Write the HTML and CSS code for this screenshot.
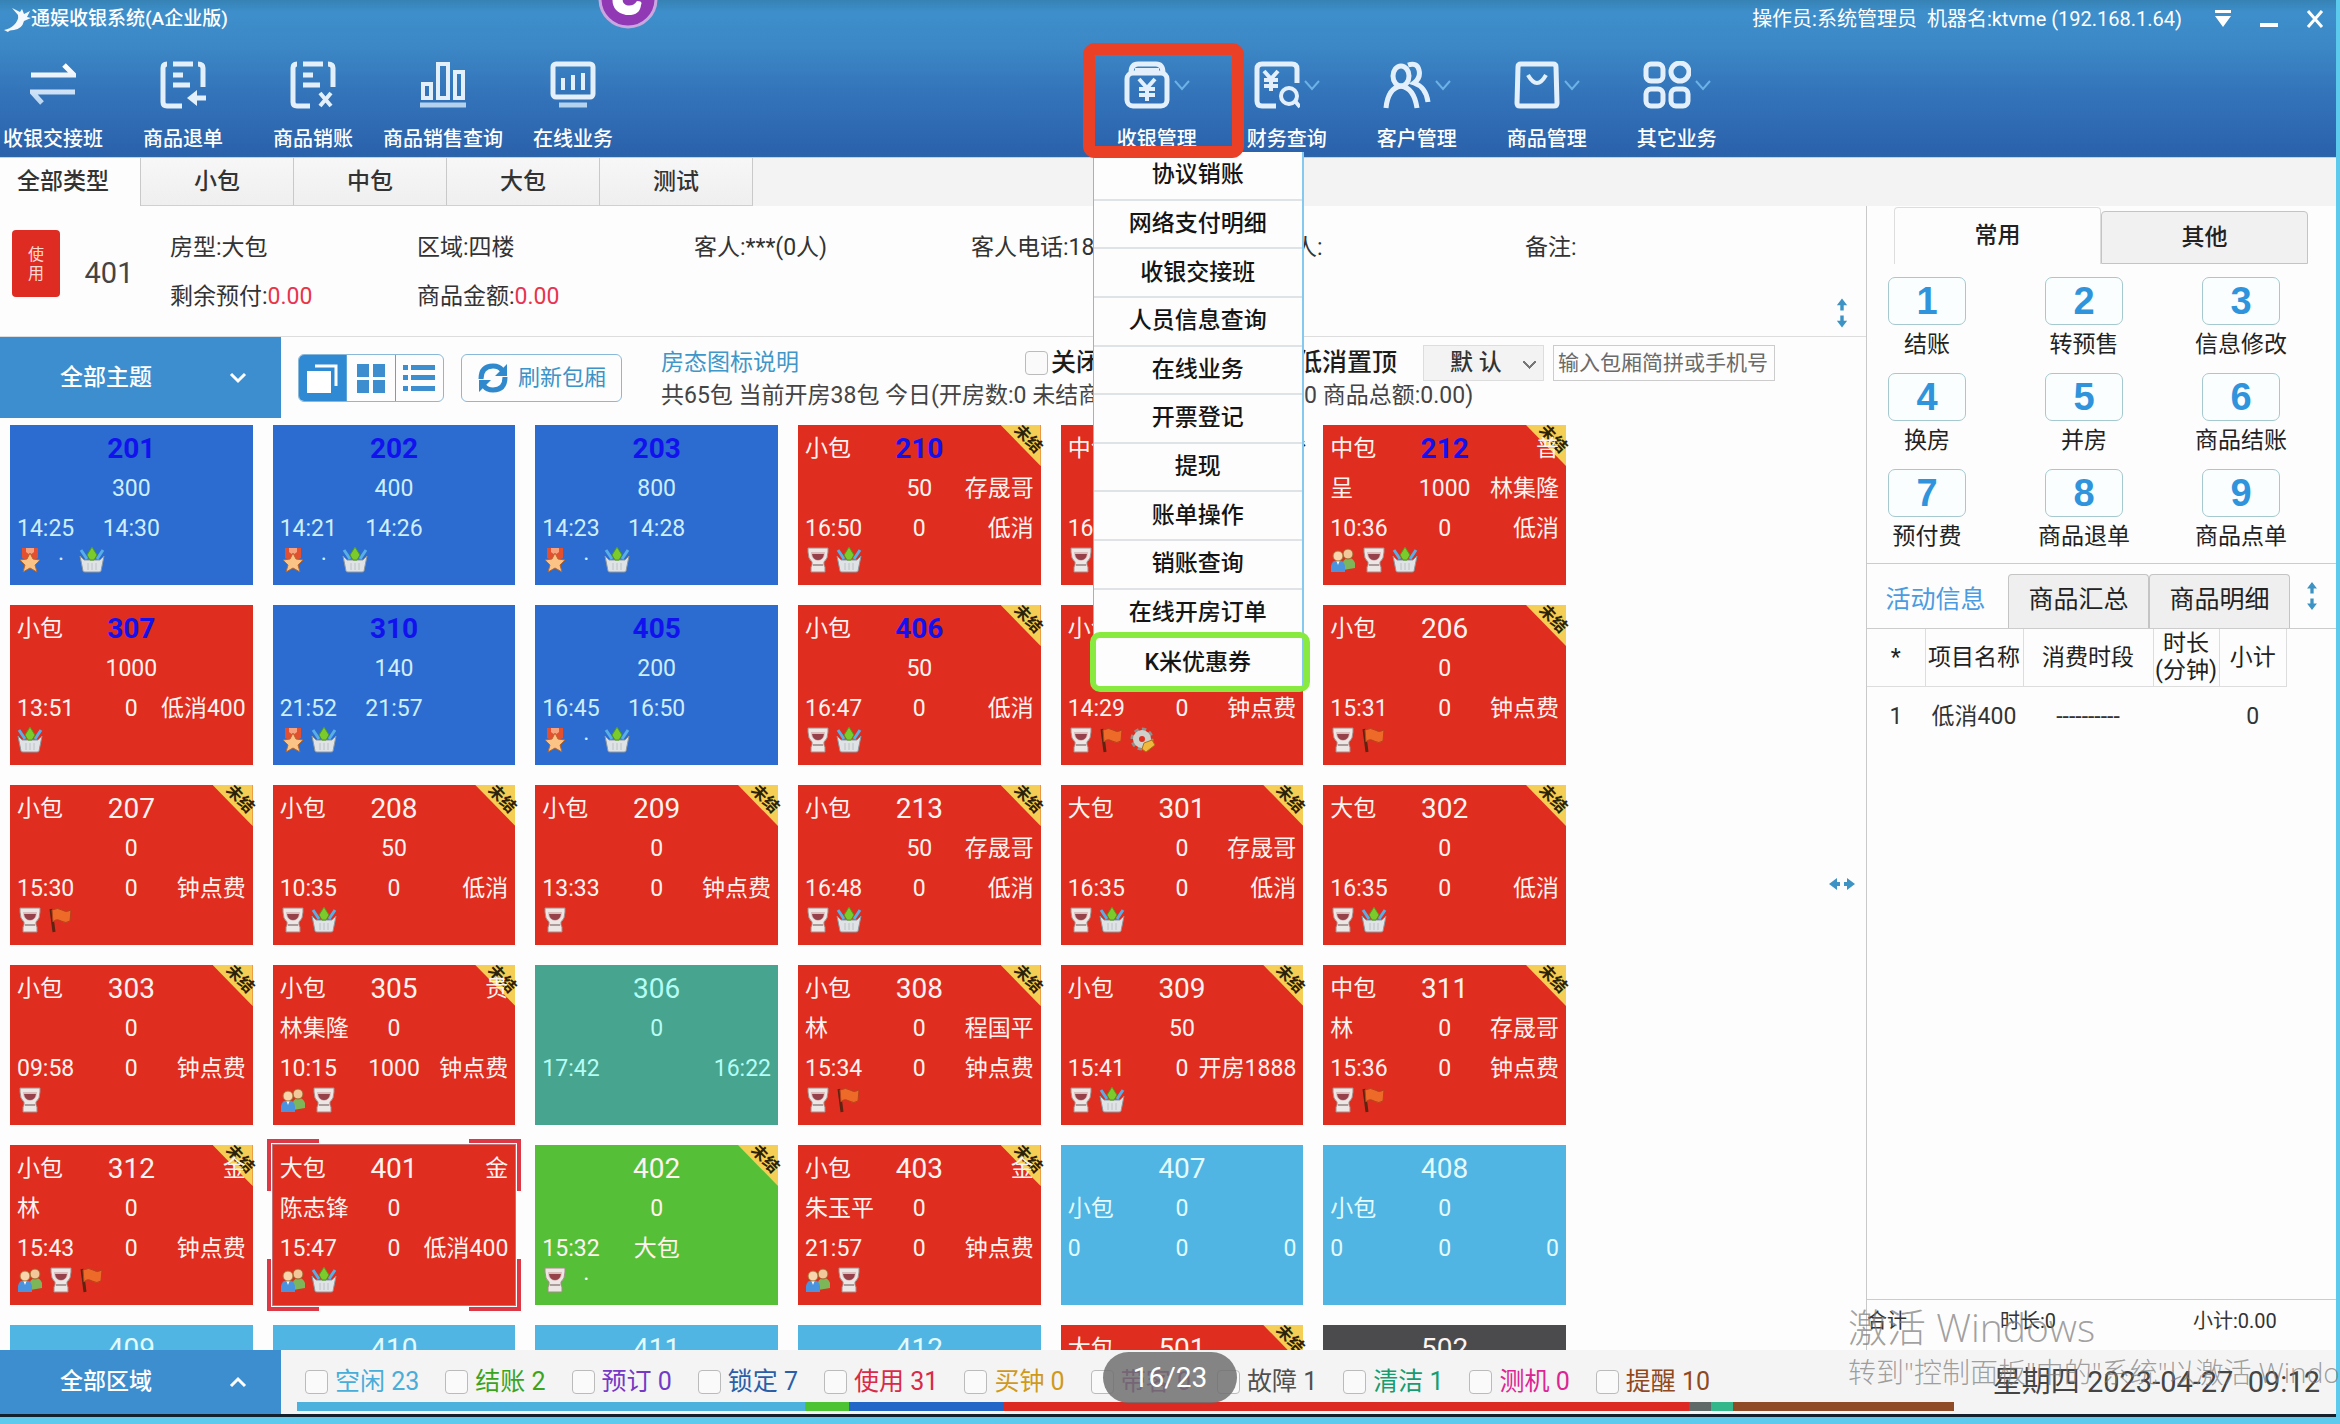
FILE: index.html
```html
<!DOCTYPE html>
<html lang="zh-CN">
<head>
<meta charset="utf-8">
<title>通娱收银系统(A企业版)</title>
<link rel="stylesheet" href="styles.css">
</head>
<body>
<svg class="defs" width="0" height="0" aria-hidden="true">
  <linearGradient id="metal" x1="0" y1="0" x2="0" y2="1"><stop offset="0" stop-color="#fff"/><stop offset="1" stop-color="#b9d6f2"/></linearGradient>
  <symbol id="chev" viewBox="0 0 16 12"><path d="M1 2l7 8 7-8" fill="none" stroke="#6db2e6" stroke-width="2"/></symbol>
  <symbol id="medal" viewBox="0 0 26 26"><path d="M5 1h16v10l-8 4-8-4z" fill="#e2502f"/><path d="M9 1h8v4l-4 3-4-3z" fill="#f7a27f"/><path d="M13 6l3 6 7 1-5 5 2 7-7-4-7 4 2-7-5-5 7-1z" fill="#fbc486" stroke="#b5672e"/></symbol>
  <symbol id="basket" viewBox="0 0 26 26"><path d="M1 9l3 15q0 1 2 1h14q2 0 2-1l3-15-4 4H5z" fill="#dfe3e6" stroke="#8d979c"/><path d="M2 3l6 9M24 3l-6 9" stroke="#58aee6" stroke-width="3"/><path d="M13 0l5 8-3 5h-4L8 8z" fill="#7bcb2c" stroke="#4f9a1c"/><path d="M9 16v7M13 16v7M17 16v7" stroke="#bcc2c6"/></symbol>
  <symbol id="cup" viewBox="0 0 26 26"><path d="M3 1h20v4q0 7-4 10v3l1 2v5H6v-5l1-2v-3Q3 12 3 5z" fill="#ece6e4" stroke="#a58c88"/><path d="M6 5h14q0 8-7 9-7-1-7-9z" fill="#d9bdbd"/><path d="M7 7h12q-1 6-6 6T7 7z" fill="#96404a"/><path d="M8 18h10" stroke="#a99c9a" stroke-width="2"/></symbol>
  <symbol id="flag" viewBox="0 0 26 26"><path d="M3 2l3 23" stroke="#5e2410" stroke-width="3"/><path d="M4 3q6-3 10 0t9 0l-1 11q-4 3-9 0t-8 1z" fill="#ee6a28" stroke="#b8431a"/></symbol>
  <symbol id="users" viewBox="0 0 26 26"><path d="M13 23V15q2-4 6-4t6 5v5z" fill="#7db659"/><circle cx="18" cy="7" r="5" fill="#f2c79a" stroke="#9a6528"/><path d="M1 25v-6q1-6 7-6t7 6v6z" fill="#4c93de"/><path d="M6 13l2 5 2-5z" fill="#fff"/><circle cx="8" cy="9" r="5" fill="#f8d5ac" stroke="#a8702e"/></symbol>
  <symbol id="gear" viewBox="0 0 26 26"><circle cx="12" cy="12" r="9" fill="none" stroke="#8f8f8c" stroke-width="5" stroke-dasharray="4 3"/><circle cx="12" cy="12" r="6" fill="none" stroke="#cfcfcc" stroke-width="6"/><path d="M14 16l8-3 3 5-9 7-4-3z" fill="#f0b83c" stroke="#a87612"/></symbol>
  <symbol id="updown" viewBox="0 0 14 34"><path d="M7 0l6 8H9v6H5V8H1zM7 34l6-8H9v-6H5v6H1z" fill="#3d93c4"/></symbol>
</svg>

<div class="window">
<header class="header">
  <div class="titlebar">
    <h1 class="title"><svg class="logo" width="28" height="26" viewBox="0 0 28 26"><path d="M1 24q6-1 10-5 5-5 4-10l-6-7 8 4 2-3 2 5 6-3-3 6 4 1-7 3q-2 8-10 9-5 0-6 2z" fill="#f3f9fd"/></svg>通娱收银系统(A企业版)</h1>
    <svg class="bubble" width="60" height="60" viewBox="0 0 60 60"><circle cx="30" cy="30" r="28" fill="#9138b4" stroke="#c9a6e0" stroke-width="3"/><path d="M16 22q-6 20 12 24 14 1 15-10 2-4-4-4-4 6-11 4-6-3-1-10z" fill="#fff"/></svg>
    <span class="operator">操作员:系统管理员&nbsp; 机器名:ktvme (192.168.1.64)</span>
    <div class="winbtns">
      <button aria-label="菜单"><svg width="18" height="18" viewBox="0 0 18 18"><path d="M1 0h16v3H1zM1 6h16l-8 11z" fill="#fff"/></svg></button>
      <button aria-label="最小化"><svg width="18" height="18" viewBox="0 0 18 18"><path d="M0 13h18v4H0z" fill="#fff"/></svg></button>
      <button aria-label="关闭"><svg width="18" height="18" viewBox="0 0 18 18"><path d="M2 1l14 16M16 1L2 17" stroke="#fff" stroke-width="3"/></svg></button>
    </div>
  </div>
  <nav class="toolbar">
    <div class="tools">
      <button class="tool"><span class="ico"><svg width="46" height="48" viewBox="0 0 46 48"><path d="M1 14h43L34 4M45 31H2l10 11" fill="none" stroke="url(#metal)" stroke-width="5"/></svg></span>收银交接班</button>
      <button class="tool"><span class="ico"><svg width="46" height="48" viewBox="0 0 46 48" fill="none" stroke="#e3f0fb" stroke-width="5"><path d="M7 3Q3 3 3 7v34q0 4 4 4h15M13 3h20M13 14h10M13 24h17M38 3q5 0 5 4v19M46 37H32"/><path d="M37 29l-10 8 10 8z" fill="#e3f0fb" stroke="none"/></svg></span>商品退单</button>
      <button class="tool"><span class="ico"><svg width="46" height="48" viewBox="0 0 46 48" fill="none" stroke="#e3f0fb" stroke-width="5"><path d="M7 3Q3 3 3 7v34q0 4 4 4h13M13 3h20M13 14h10M13 24h17M38 3q5 0 5 4v19" /><path d="M30 32l11 13M41 32L30 45" stroke-width="4"/></svg></span>商品销账</button>
      <button class="tool"><span class="ico"><svg width="48" height="48" viewBox="0 0 48 48" fill="none" stroke="#e3f0fb" stroke-width="4"><path d="M4 23h8v14H4zM19 3h10v34H19zM36 11h8v26h-8z"/><path d="M1 44h46" stroke="#b4d2ee" stroke-width="5"/></svg></span>商品销售查询</button>
      <button class="tool"><span class="ico"><svg width="46" height="48" viewBox="0 0 46 48" fill="none" stroke="#e3f0fb" stroke-width="5"><rect x="3" y="3" width="40" height="33" rx="3"/><path d="M13 17v12M23 14v15M33 12v17" stroke-width="4"/><path d="M9 44h28" stroke="#b4d2ee"/></svg></span>在线业务</button>
    </div>
    <div class="tools">
      <div class="tool-menu">
        <button class="tool"><span class="ico"><svg width="46" height="48" viewBox="0 0 46 48" fill="none" stroke="#e3f0fb" stroke-width="5"><rect x="3" y="12" width="40" height="33" rx="6"/><path d="M7 12q0-9 7-9h18q7 0 7 9"/><path d="M11 9h24M15 18l8 9 8-9M23 27v13M15 28h16M15 34h16" stroke-width="4"/></svg><svg width="16" height="12"><use href="#chev"/></svg></span>收银管理</button>
        <ul class="menu">
          <li><button>协议销账</button></li>
          <li><button>网络支付明细</button></li>
          <li><button>收银交接班</button></li>
          <li><button>人员信息查询</button></li>
          <li><button>在线业务</button></li>
          <li><button>开票登记</button></li>
          <li><button>提现</button></li>
          <li><button>账单操作</button></li>
          <li><button>销账查询</button></li>
          <li><button>在线开房订单</button></li>
          <li class="marked"><button>K米优惠券</button></li>
        </ul>
        <span class="highlight"></span>
      </div>
      <button class="tool"><span class="ico"><svg width="46" height="48" viewBox="0 0 46 48" fill="none" stroke="#e3f0fb" stroke-width="4"><path d="M43 22V8q0-5-5-5H8Q3 3 3 8v32q0 5 5 5h14" stroke-width="5"/><path d="M10 10l7 8 7-8M17 18v12M10 19h14M10 25h14M41 40l5 6"/><circle cx="35" cy="35" r="8"/></svg><svg width="16" height="12"><use href="#chev"/></svg></span>财务查询</button>
      <button class="tool"><span class="ico"><svg width="48" height="48" viewBox="0 0 48 48" fill="none" stroke="#e3f0fb" stroke-width="5"><ellipse cx="18" cy="15" rx="8" ry="10"/><path d="M3 47q2-20 15-22 13 2 16 22M25 4q9-3 11 5t-5 13q12 4 14 19"/></svg><svg width="16" height="12"><use href="#chev"/></svg></span>客户管理</button>
      <button class="tool"><span class="ico"><svg width="46" height="48" viewBox="0 0 46 48" fill="none" stroke="#e3f0fb" stroke-width="5"><path d="M7 3h32q3 0 3 3l1 36q0 3-3 3H6q-3 0-3-3L4 6q0-3 3-3z"/><path d="M14 14q9 16 18 0" stroke-width="4"/></svg><svg width="16" height="12"><use href="#chev"/></svg></span>商品管理</button>
      <button class="tool"><span class="ico"><svg width="48" height="48" viewBox="0 0 48 48" fill="none" stroke="#e3f0fb" stroke-width="5"><rect x="3" y="3" width="17" height="17" rx="5"/><circle cx="37" cy="11" r="9"/><rect x="3" y="28" width="17" height="17" rx="5"/><rect x="28" y="28" width="17" height="17" rx="5"/></svg><svg width="16" height="12"><use href="#chev"/></svg></span>其它业务</button>
    </div>
  </nav>
</header>

<nav class="types">
  <button class="type on">全部类型</button><button class="type">小包</button><button class="type">中包</button><button class="type">大包</button><button class="type">测试</button>
</nav>

<main class="main">
  <section class="left">
    <div class="info">
      <span class="badge">使<br>用</span>
      <strong class="roomno">401</strong>
      <div class="fields">
        <span>房型:大包</span><span>区域:四楼</span><span>客人:***(0人)</span><span>客人电话:18650000000</span><span>订房人:</span><span>备注:</span>
        <span>剩余预付:<em>0.00</em></span><span>商品金额:<em>0.00</em></span>
      </div>
      <svg class="split-v" width="12" height="32"><use href="#updown"/></svg>
    </div>

    <div class="filters">
      <button class="bluebox"><span>全部主题</span><svg width="18" height="12" viewBox="0 0 18 12"><path d="M2 2l7 7 7-7" fill="none" stroke="#fff" stroke-width="3"/></svg></button>
      <div class="views">
        <button class="on" aria-label="卡片"><svg width="34" height="32" viewBox="0 0 34 32"><path d="M1 9h24v22H1z" fill="#fff"/><path d="M9 4h21v20" fill="none" stroke="#fff" stroke-width="3"/></svg></button>
        <button aria-label="网格"><svg width="28" height="30" viewBox="0 0 28 30"><path d="M0 1h12v13H0zM16 1h12v13H16zM0 17h12v13H0zM16 17h12v13H16z" fill="#3d8ecf"/></svg></button>
        <button aria-label="列表"><svg width="32" height="28" viewBox="0 0 32 28"><path d="M0 1h5v5H0zM8 1h24v5H8zM0 11h5v5H0zM8 11h24v5H8zM0 22h5v5H0zM8 22h24v5H8z" fill="#3d8ecf"/></svg></button>
      </div>
      <button class="refresh"><svg width="32" height="32" viewBox="0 0 32 32"><path d="M4 17Q4 4 16 4q6 0 9 4M28 15q0 13-12 13-6 0-9-4" fill="none" stroke="#3089cc" stroke-width="5"/><path d="M30 2v12H18zM2 30V18h12z" fill="#3089cc"/></svg>刷新包厢</button>
      <div class="summary">
        <div class="line">
          <a class="legend" href="#">房态图标说明</a>
          <label class="chk"><input type="checkbox">关闭空房超时提醒</label>
          <label class="chk"><input type="checkbox">低消置顶</label>
          <select class="order" aria-label="排序"><option>默 认</option></select>
          <input class="search" type="text" aria-label="搜索包厢" placeholder="输入包厢简拼或手机号">
        </div>
        <p class="stats">共65包 当前开房38包 今日(开房数:0 未结商品:0.00房费总额:0.00 商品总额:0.00)</p>
      </div>
    </div>

    <div class="board">
      <div class="rooms">
        <button class="room blue vip"><span class="r"><i></i><b>201</b><i></i></span><span class="r"><i></i><u>300</u><i></i></span><span class="r"><i>14:25</i><u>14:30</u><i></i></span><span class="icons"><svg><use href="#medal"/></svg><s>·</s><svg><use href="#basket"/></svg></span></button>
        <button class="room blue vip"><span class="r"><i></i><b>202</b><i></i></span><span class="r"><i></i><u>400</u><i></i></span><span class="r"><i>14:21</i><u>14:26</u><i></i></span><span class="icons"><svg><use href="#medal"/></svg><s>·</s><svg><use href="#basket"/></svg></span></button>
        <button class="room blue vip"><span class="r"><i></i><b>203</b><i></i></span><span class="r"><i></i><u>800</u><i></i></span><span class="r"><i>14:23</i><u>14:28</u><i></i></span><span class="icons"><svg><use href="#medal"/></svg><s>·</s><svg><use href="#basket"/></svg></span></button>
        <button class="room vip due"><span class="r"><i>小包</i><b>210</b><i></i></span><span class="r"><i></i><u>50</u><i>存晟哥</i></span><span class="r"><i>16:50</i><u>0</u><i>低消</i></span><span class="icons"><svg><use href="#cup"/></svg><svg><use href="#basket"/></svg></span></button>
        <button class="room vip due"><span class="r"><i>中包</i><b>211</b><i></i></span><span class="r"><i></i><u>0</u><i></i></span><span class="r"><i>16:52</i><u>0</u><i>低消</i></span><span class="icons"><svg><use href="#cup"/></svg></span></button>
        <button class="room vip due"><span class="r"><i>中包</i><b>212</b><i>普</i></span><span class="r"><i>呈</i><u>1000</u><i>林集隆</i></span><span class="r"><i>10:36</i><u>0</u><i>低消</i></span><span class="icons"><svg><use href="#users"/></svg><svg><use href="#cup"/></svg><svg><use href="#basket"/></svg></span></button>

        <button class="room vip"><span class="r"><i>小包</i><b>307</b><i></i></span><span class="r"><i></i><u>1000</u><i></i></span><span class="r"><i>13:51</i><u>0</u><i>低消400</i></span><span class="icons"><svg><use href="#basket"/></svg></span></button>
        <button class="room blue vip"><span class="r"><i></i><b>310</b><i></i></span><span class="r"><i></i><u>140</u><i></i></span><span class="r"><i>21:52</i><u>21:57</u><i></i></span><span class="icons"><svg><use href="#medal"/></svg><svg><use href="#basket"/></svg></span></button>
        <button class="room blue vip"><span class="r"><i></i><b>405</b><i></i></span><span class="r"><i></i><u>200</u><i></i></span><span class="r"><i>16:45</i><u>16:50</u><i></i></span><span class="icons"><svg><use href="#medal"/></svg><s>·</s><svg><use href="#basket"/></svg></span></button>
        <button class="room vip due"><span class="r"><i>小包</i><b>406</b><i></i></span><span class="r"><i></i><u>50</u><i></i></span><span class="r"><i>16:47</i><u>0</u><i>低消</i></span><span class="icons"><svg><use href="#cup"/></svg><svg><use href="#basket"/></svg></span></button>
        <button class="room"><span class="r"><i>小包</i><b>205</b><i></i></span><span class="r"><i></i><u>0</u><i></i></span><span class="r"><i>14:29</i><u>0</u><i>钟点费</i></span><span class="icons"><svg><use href="#cup"/></svg><svg><use href="#flag"/></svg><svg><use href="#gear"/></svg></span></button>
        <button class="room due"><span class="r"><i>小包</i><b>206</b><i></i></span><span class="r"><i></i><u>0</u><i></i></span><span class="r"><i>15:31</i><u>0</u><i>钟点费</i></span><span class="icons"><svg><use href="#cup"/></svg><svg><use href="#flag"/></svg></span></button>

        <button class="room due"><span class="r"><i>小包</i><b>207</b><i></i></span><span class="r"><i></i><u>0</u><i></i></span><span class="r"><i>15:30</i><u>0</u><i>钟点费</i></span><span class="icons"><svg><use href="#cup"/></svg><svg><use href="#flag"/></svg></span></button>
        <button class="room due"><span class="r"><i>小包</i><b>208</b><i></i></span><span class="r"><i></i><u>50</u><i></i></span><span class="r"><i>10:35</i><u>0</u><i>低消</i></span><span class="icons"><svg><use href="#cup"/></svg><svg><use href="#basket"/></svg></span></button>
        <button class="room due"><span class="r"><i>小包</i><b>209</b><i></i></span><span class="r"><i></i><u>0</u><i></i></span><span class="r"><i>13:33</i><u>0</u><i>钟点费</i></span><span class="icons"><svg><use href="#cup"/></svg></span></button>
        <button class="room due"><span class="r"><i>小包</i><b>213</b><i></i></span><span class="r"><i></i><u>50</u><i>存晟哥</i></span><span class="r"><i>16:48</i><u>0</u><i>低消</i></span><span class="icons"><svg><use href="#cup"/></svg><svg><use href="#basket"/></svg></span></button>
        <button class="room due"><span class="r"><i>大包</i><b>301</b><i></i></span><span class="r"><i></i><u>0</u><i>存晟哥</i></span><span class="r"><i>16:35</i><u>0</u><i>低消</i></span><span class="icons"><svg><use href="#cup"/></svg><svg><use href="#basket"/></svg></span></button>
        <button class="room due"><span class="r"><i>大包</i><b>302</b><i></i></span><span class="r"><i></i><u>0</u><i></i></span><span class="r"><i>16:35</i><u>0</u><i>低消</i></span><span class="icons"><svg><use href="#cup"/></svg><svg><use href="#basket"/></svg></span></button>

        <button class="room due"><span class="r"><i>小包</i><b>303</b><i></i></span><span class="r"><i></i><u>0</u><i></i></span><span class="r"><i>09:58</i><u>0</u><i>钟点费</i></span><span class="icons"><svg><use href="#cup"/></svg></span></button>
        <button class="room due"><span class="r"><i>小包</i><b>305</b><i>贵</i></span><span class="r"><i>林集隆</i><u>0</u><i></i></span><span class="r"><i>10:15</i><u>1000</u><i>钟点费</i></span><span class="icons"><svg><use href="#users"/></svg><svg><use href="#cup"/></svg></span></button>
        <button class="room teal"><span class="r"><i></i><b>306</b><i></i></span><span class="r"><i></i><u>0</u><i></i></span><span class="r"><i>17:42</i><u></u><i>16:22</i></span></button>
        <button class="room due"><span class="r"><i>小包</i><b>308</b><i></i></span><span class="r"><i>林</i><u>0</u><i>程国平</i></span><span class="r"><i>15:34</i><u>0</u><i>钟点费</i></span><span class="icons"><svg><use href="#cup"/></svg><svg><use href="#flag"/></svg></span></button>
        <button class="room due"><span class="r"><i>小包</i><b>309</b><i></i></span><span class="r"><i></i><u>50</u><i></i></span><span class="r"><i>15:41</i><u>0</u><i>开房1888</i></span><span class="icons"><svg><use href="#cup"/></svg><svg><use href="#basket"/></svg></span></button>
        <button class="room due"><span class="r"><i>中包</i><b>311</b><i></i></span><span class="r"><i>林</i><u>0</u><i>存晟哥</i></span><span class="r"><i>15:36</i><u>0</u><i>钟点费</i></span><span class="icons"><svg><use href="#cup"/></svg><svg><use href="#flag"/></svg></span></button>

        <button class="room due"><span class="r"><i>小包</i><b>312</b><i>金</i></span><span class="r"><i>林</i><u>0</u><i></i></span><span class="r"><i>15:43</i><u>0</u><i>钟点费</i></span><span class="icons"><svg><use href="#users"/></svg><svg><use href="#cup"/></svg><svg><use href="#flag"/></svg></span></button>
        <button class="room selected"><span class="r"><i>大包</i><b>401</b><i>金</i></span><span class="r"><i>陈志锋</i><u>0</u><i></i></span><span class="r"><i>15:47</i><u>0</u><i>低消400</i></span><span class="icons"><svg><use href="#users"/></svg><svg><use href="#basket"/></svg></span></button>
        <button class="room green due"><span class="r"><i></i><b>402</b><i></i></span><span class="r"><i></i><u>0</u><i></i></span><span class="r"><i>15:32</i><u>大包</u><i></i></span><span class="icons"><svg><use href="#cup"/></svg><s>·</s></span></button>
        <button class="room due"><span class="r"><i>小包</i><b>403</b><i>金</i></span><span class="r"><i>朱玉平</i><u>0</u><i></i></span><span class="r"><i>21:57</i><u>0</u><i>钟点费</i></span><span class="icons"><svg><use href="#users"/></svg><svg><use href="#cup"/></svg></span></button>
        <button class="room sky"><span class="r"><i></i><b>407</b><i></i></span><span class="r"><i>小包</i><u>0</u><i></i></span><span class="r"><i>0</i><u>0</u><i>0</i></span></button>
        <button class="room sky"><span class="r"><i></i><b>408</b><i></i></span><span class="r"><i>小包</i><u>0</u><i></i></span><span class="r"><i>0</i><u>0</u><i>0</i></span></button>

        <button class="room sky"><span class="r"><i></i><b>409</b><i></i></span></button>
        <button class="room sky"><span class="r"><i></i><b>410</b><i></i></span></button>
        <button class="room sky"><span class="r"><i></i><b>411</b><i></i></span></button>
        <button class="room sky"><span class="r"><i></i><b>412</b><i></i></span></button>
        <button class="room due"><span class="r"><i>大包</i><b>501</b><i></i></span></button>
        <button class="room dark"><span class="r"><i></i><b>502</b><i></i></span></button>
      </div>
      <svg class="split-h" width="26" height="12" viewBox="0 0 26 12"><path d="M0 6l8-6v4h3v4H8v4zM26 6l-8-6v4h-3v4h3v4z" fill="#3d93c4"/></svg>
    </div>
  </section>

  <aside class="side">
    <div class="sidetabs"><button class="on">常用</button><button>其他</button></div>
    <div class="keys">
      <button class="key"><kbd>1</kbd>结账</button><button class="key"><kbd>2</kbd>转预售</button><button class="key"><kbd>3</kbd>信息修改</button>
      <button class="key"><kbd>4</kbd>换房</button><button class="key"><kbd>5</kbd>并房</button><button class="key"><kbd>6</kbd>商品结账</button>
      <button class="key"><kbd>7</kbd>预付费</button><button class="key"><kbd>8</kbd>商品退单</button><button class="key"><kbd>9</kbd>商品点单</button>
    </div>
    <div class="detailtabs"><button class="on">活动信息</button><button>商品汇总</button><button>商品明细</button><svg width="12" height="28" viewBox="0 0 14 34"><use href="#updown"/></svg></div>
    <table class="items">
      <thead><tr><th>*</th><th>项目名称</th><th>消费时段</th><th>时长<br>(分钟)</th><th>小计</th></tr></thead>
      <tbody><tr><td>1</td><td>低消400</td><td>----------</td><td></td><td>0</td></tr></tbody>
    </table>
    <div class="totals"><span>合计</span><span>时长:0</span><span>小计:0.00</span></div>
  </aside>
</main>

<footer class="footer">
  <button class="bluebox"><span>全部区域</span><svg width="18" height="12" viewBox="0 0 18 12"><path d="M2 10l7-7 7 7" fill="none" stroke="#fff" stroke-width="3"/></svg></button>
  <div class="states">
    <div class="checks">
      <label class="c-idle"><input type="checkbox">空闲 23</label>
      <label class="c-paid"><input type="checkbox">结账 2</label>
      <label class="c-book"><input type="checkbox">预订 0</label>
      <label class="c-lock"><input type="checkbox">锁定 7</label>
      <label class="c-used"><input type="checkbox">使用 31</label>
      <label class="c-time"><input type="checkbox">买钟 0</label>
      <label class="c-lead"><input type="checkbox">带客 0</label>
      <label class="c-broken"><input type="checkbox">故障 1</label>
      <label class="c-clean"><input type="checkbox">清洁 1</label>
      <label class="c-test"><input type="checkbox">测机 0</label>
      <label class="c-remind"><input type="checkbox">提醒 10</label>
    </div>
    <div class="bar"><span class="b-idle" style="flex-grow:23"></span><span class="b-paid" style="flex-grow:2"></span><span class="b-lock" style="flex-grow:7"></span><span class="b-used" style="flex-grow:31"></span><span class="b-broken" style="flex-grow:1"></span><span class="b-clean" style="flex-grow:1"></span><span class="b-remind" style="flex-grow:10"></span></div>
  </div>
  <time class="clock">星期四 2023-04-27&nbsp; 09:12</time>
</footer>
</div>

<div class="activate"><p class="a1">激活 Windows</p><p class="a2">转到"控制面板"中的"系统"以激活 Windows</p></div>
<div class="pager">16/23</div>
</body>
</html>
```
FILE: styles.css
```css
* { box-sizing: border-box; }
body, h1, p, ul { margin: 0; padding: 0; }
body {
  height: 100vh;
  overflow: hidden;
  background: #5ccaed;
  color: #333;
  font: 23px/32px Roboto, "Noto Sans CJK SC", sans-serif;
}
button, input, select { font: inherit; color: inherit; }
button { border: 0; padding: 0; margin: 0; background: none; white-space: nowrap; }
svg { flex: none; display: block; }
.defs { position: absolute; }

.window {
  display: flex;
  flex-direction: column;
  height: calc(100vh - 7px);
  margin-right: 4px;
  background: #fdfdfd;
  border-bottom: 3px solid #14202c;
}

/* header */
.header {
  flex: none;
  height: 157px;
  background: linear-gradient(#3682b4 0, #3d8fcb 12px, #3c88c6 45px, #3373b9 95px, #2a62ab 154px, #2c66a8);
  color: #fff;
}
.titlebar { display: flex; align-items: center; height: 38px; padding: 0 12px 0 3px; position: relative; }
.title { display: flex; align-items: center; font-size: 19px; font-weight: 500; line-height: 38px; }
.bubble { position: absolute; left: 598px; top: -31px; }
.operator { margin-left: auto; font-size: 20px; }
.winbtns { display: flex; gap: 28px; margin-left: 32px; }
.toolbar { display: grid; grid-template-columns: 47.25% 1fr; }
.tools { display: flex; gap: 24px; }
.tool { display: flex; flex-direction: column; align-items: center; width: 106px; height: 119px; padding-top: 23px; font-size: 20px; font-weight: 500; line-height: 28px; }
.ico { display: flex; align-items: center; gap: 4px; height: 48px; margin-bottom: 16px; }
.tool-menu { position: relative; }
.highlight { position: absolute; left: -21px; top: 5px; width: 161px; height: 115px; border: 12px solid #ea4025; border-radius: 12px; z-index: 6; }
.menu {
  position: absolute;
  left: -11px;
  top: 114px;
  width: 211px;
  height: 535px;
  display: grid;
  grid-template-rows: repeat(11, 1fr);
  list-style: none;
  background: #fdfdfd;
  border-left: 1px solid #9fb4c0;
  border-right: 2px solid #85c9ee;
  color: #151515;
  font-weight: 500;
  z-index: 5;
}
.menu li { display: grid; border-bottom: 2px solid #dfe3e6; position: relative; }
.menu li.marked { border-bottom: 0; }
.marked::after { content: ""; position: absolute; inset: -6px -8px -5px -4px; border: 6px solid #88ea3f; border-radius: 10px; }

/* room types */
.types { flex: none; display: flex; height: 49px; background: #f3f3f3; border-top: 1px solid #b9d3ea; font-weight: 500; }
.type { width: 153px; border-right: 1px solid #c9c9c9; border-bottom: 1px solid #d0d0d0; background: linear-gradient(#f7f7f7, #efefef); }
.type.on { width: 141px; padding-right: 14px; background: #fdfdfd; border-bottom: 0; }

.main { flex: 1; min-height: 0; display: grid; grid-template-columns: 1fr 470px; }
.left { display: flex; flex-direction: column; min-height: 0; }

/* current room */
.info { flex: none; display: flex; height: 131px; padding-left: 12px; border-bottom: 1px solid #ddd; }
.badge { width: 48px; height: 67px; margin-top: 24px; padding-top: 15px; border-radius: 4px; background: #df2c22; color: #ffd9d4; font-size: 16px; line-height: 19px; text-align: center; }
.roomno { width: 86px; margin-top: 51px; padding-left: 12px; font-size: 29px; font-weight: 400; text-align: center; color: #444; }
.fields { flex: 1; display: grid; grid-template-columns: 247px repeat(5, 277px); grid-template-rows: 49px 49px; align-items: center; padding: 17px 0 0 24px; width: 0; white-space: nowrap; }
.fields em { font-style: normal; color: #e8344e; }
.split-v { margin: 91px 18px 0 0; }

/* filters */
.filters { flex: none; display: flex; align-items: center; height: 81px; }
.bluebox { flex: none; display: flex; align-items: center; justify-content: space-between; width: 281px; height: 100%; padding: 0 34px 0 60px; background: #3d8ecf; color: #fff; font-weight: 500; }
.views { display: flex; width: 146px; height: 48px; margin: 0 17px; border: 1px solid #8ab8d8; border-radius: 6px; overflow: hidden; }
.views button { flex: 1; display: flex; align-items: center; justify-content: center; border-left: 1px solid #5aa6d8; }
.views button.on { background: #3089d3; border: 0; }
.refresh { display: flex; align-items: center; justify-content: center; gap: 9px; width: 161px; height: 48px; border: 1px solid #8ab8d8; border-radius: 6px; color: #3b93c8; font-size: 22px; }
.summary { flex: 1; margin-left: 39px; white-space: nowrap; }
.line { display: flex; align-items: center; height: 36px; }
.legend { color: #3f97c9; text-decoration: none; margin-right: 226px; }
.chk { display: flex; align-items: center; gap: 3px; margin-right: 20px; font-size: 25px; font-weight: 500; color: #1c1c1c; }
input[type="checkbox"] { appearance: none; flex: none; width: 23px; height: 24px; margin: 0; border: 1px solid #bbb; border-radius: 4px; background: #fafafa; }
.order { width: 121px; height: 36px; margin: 0 9px 0 6px; padding: 0 10px 0 26px; border: 1px solid #ddd; border-radius: 0; color: #333; font-weight: 500; appearance: none;
  background-color: #f3f3f3;
  background-image: linear-gradient(-45deg, #0000 42%, #777 42%, #777 62%, #0000 62%), linear-gradient(45deg, #0000 42%, #777 42%, #777 62%, #0000 62%);
  background-position: 105px 15px, 99px 15px;
  background-size: 7px 8px;
  background-repeat: no-repeat; }
.search { width: 222px; height: 36px; padding: 0 4px; border: 1px solid #ccc; background: #fdfdfd; font-size: 21px; }
.search::placeholder { color: #6a6a6a; opacity: 1; }
.stats { color: #444; line-height: 30px; }

/* room board */
.board { flex: 1; min-height: 0; display: flex; align-items: center; }
.rooms { flex: 1; height: 100%; overflow: hidden; display: grid; grid-template-columns: repeat(6, 1fr); grid-auto-rows: 160px; gap: 20px; align-content: start; padding: 7px 263px 0 10px; }
.split-h { margin-right: 11px; }
.room { position: relative; display: grid; grid-template-rows: 40px 40px 38px 26px; align-content: start; justify-content: stretch; padding: 4px 7px 0; background: #df2d20; color: #fff3f0; text-align: left; }
.blue { background: #2c6bcf; color: #cdeefc; }
.teal { background: #47a48f; color: #b4fdf6; }
.green { background: #56bf38; }
.sky { background: #50b5e2; color: #e2fbff; }
.dark { background: #4b4b4d; }
.r { display: grid; grid-template-columns: minmax(0, 1fr) auto minmax(0, 1fr); line-height: 40px; position: relative; z-index: 1; }
.r i { font-style: normal; }
.r i:last-child { display: flex; justify-content: flex-end; }
.r u { text-decoration: none; text-align: center; }
.r b { font-size: 28px; font-weight: 400; }
.vip b { font-weight: 700; color: #1212ee; }
.icons { display: flex; gap: 5px; }
.icons svg { width: 26px; height: 26px; }
.icons s { width: 26px; text-align: center; text-decoration: none; line-height: 26px; }
.due::before { content: ""; position: absolute; right: 0; top: 0; width: 40px; height: 41px; background: #f5cf55; clip-path: polygon(0 0, 100% 0, 100% 100%); }
.due::after { content: "未结"; position: absolute; right: -3px; top: 5px; color: #2b2208; font-size: 16px; font-weight: 700; line-height: 18px; transform: rotate(46deg); }
.selected { box-shadow: 0 0 0 1px #b9777a, 0 0 0 2px #fff; }
.selected::before {
  content: "";
  position: absolute;
  inset: -6px;
  --c: linear-gradient(#dc3845, #dc3845);
  background: var(--c) 0 0 / 52px 4px, var(--c) 0 0 / 4px 52px, var(--c) 100% 0 / 52px 4px, var(--c) 100% 0 / 4px 52px,
    var(--c) 0 100% / 52px 4px, var(--c) 0 100% / 4px 52px, var(--c) 100% 100% / 52px 4px, var(--c) 100% 100% / 4px 52px;
  background-repeat: no-repeat;
}

/* side panel */
.side { display: flex; flex-direction: column; border-left: 1px solid #c9c9c9; }
.sidetabs { display: flex; align-items: flex-end; height: 58px; margin: 0 28px 13px 27px; font-weight: 500; }
.sidetabs button { flex: 1; height: 53px; border: 1px solid #c4c4c4; border-radius: 4px 4px 0 0; background: #f1f1f1; color: #222; }
.sidetabs .on { height: 57px; background: #fdfdfd; border-color: #ddd; border-bottom: 0; }
.keys { display: grid; grid-template-columns: repeat(3, 120px); gap: 12px 37px; padding-bottom: 10px; border-bottom: 1px solid #ccc; color: #222; }
.key { display: grid; justify-items: center; gap: 4px; line-height: 32px; }
kbd { width: 78px; height: 48px; border: 1px solid #a5c9cf; border-radius: 7px; background: #fafefe; color: #2f94dc; font: 700 38px/46px "Liberation Sans", sans-serif; }
.detailtabs { display: flex; align-items: flex-end; height: 65px; border-bottom: 1px solid #ccc; }
.detailtabs button { width: 141px; height: 54px; padding-bottom: 4px; border: 1px solid #c4c4c4; border-bottom: 0; border-radius: 4px 4px 0 0; background: #efefef; font-size: 25px; color: #222; }
.detailtabs .on { padding-right: 4px; background: none; border-color: #0000; color: #4a9be0; }
.detailtabs svg { margin: 0 0 18px 16px; }
.items { width: 420px; border-collapse: collapse; table-layout: fixed; color: #333; }
.items th, .items td { padding: 0; font-weight: 400; text-align: center; white-space: nowrap; }
.items th { height: 57px; line-height: 27px; border-right: 1px solid #ddd; border-bottom: 1px solid #ddd; color: #222; }
.items td { height: 62px; }
.items th:nth-child(1) { width: 58px; }
.items th:nth-child(2) { width: 98px; }
.items th:nth-child(3) { width: 130px; }
.items th:nth-child(4) { width: 66px; }
.totals { display: grid; grid-template-columns: 133px 193px 1fr; margin-top: auto; height: 51px; border-top: 1px solid #ccc; font-size: 20px; line-height: 42px; }

/* footer */
.footer { flex: none; display: grid; grid-template-columns: 281px 1fr auto; height: 64px; background: #f4f4f4; }
.states { display: flex; flex-direction: column; margin: 0 39px 0 16px; }
.checks { display: flex; gap: 26px; height: 52px; padding: 14px 0 0 8px; font-size: 25px; white-space: nowrap; }
.checks label { display: flex; align-items: center; gap: 7px; height: 36px; }
.c-idle { color: #48add9; } .c-paid { color: #3ba41d; } .c-book { color: #7539c6; } .c-lock { color: #2a5fa8; }
.c-used { color: #d92a48; } .c-time { color: #cf9a1c; } .c-lead { color: #9a2894; } .c-broken { color: #505050; }
.c-clean { color: #179c70; } .c-test { color: #dd2593; } .c-remind { color: #92481d; }
.bar { display: flex; height: 9px; }
.bar span { flex-basis: 0; }
.b-idle { background: #4cb2dd; } .b-paid { background: #4cc332; } .b-lock { background: #2266c8; } .b-used { background: #dc2a22; }
.b-broken { background: #5f6a68; } .b-clean { background: #35b78c; } .b-remind { background: #8f4a26; }
.clock { padding: 16px 16px 0 0; font-size: 29px; color: #444; white-space: nowrap; }

/* overlays */
.activate { position: absolute; right: 0; bottom: 32px; width: 492px; overflow: hidden; white-space: nowrap; color: rgba(120, 120, 120, .7); font-family: "Open Sans", "Noto Sans CJK SC", sans-serif; font-weight: 300; pointer-events: none; }
.a1 { font-size: 39px; line-height: 50px; }
.a2 { font-size: 28px; line-height: 40px; }
.pager { position: absolute; left: 1103px; bottom: 21px; width: 134px; height: 51px; border-radius: 26px; background: rgba(112, 112, 112, .85); color: #fff; font-size: 28px; line-height: 51px; text-align: center; }
```
